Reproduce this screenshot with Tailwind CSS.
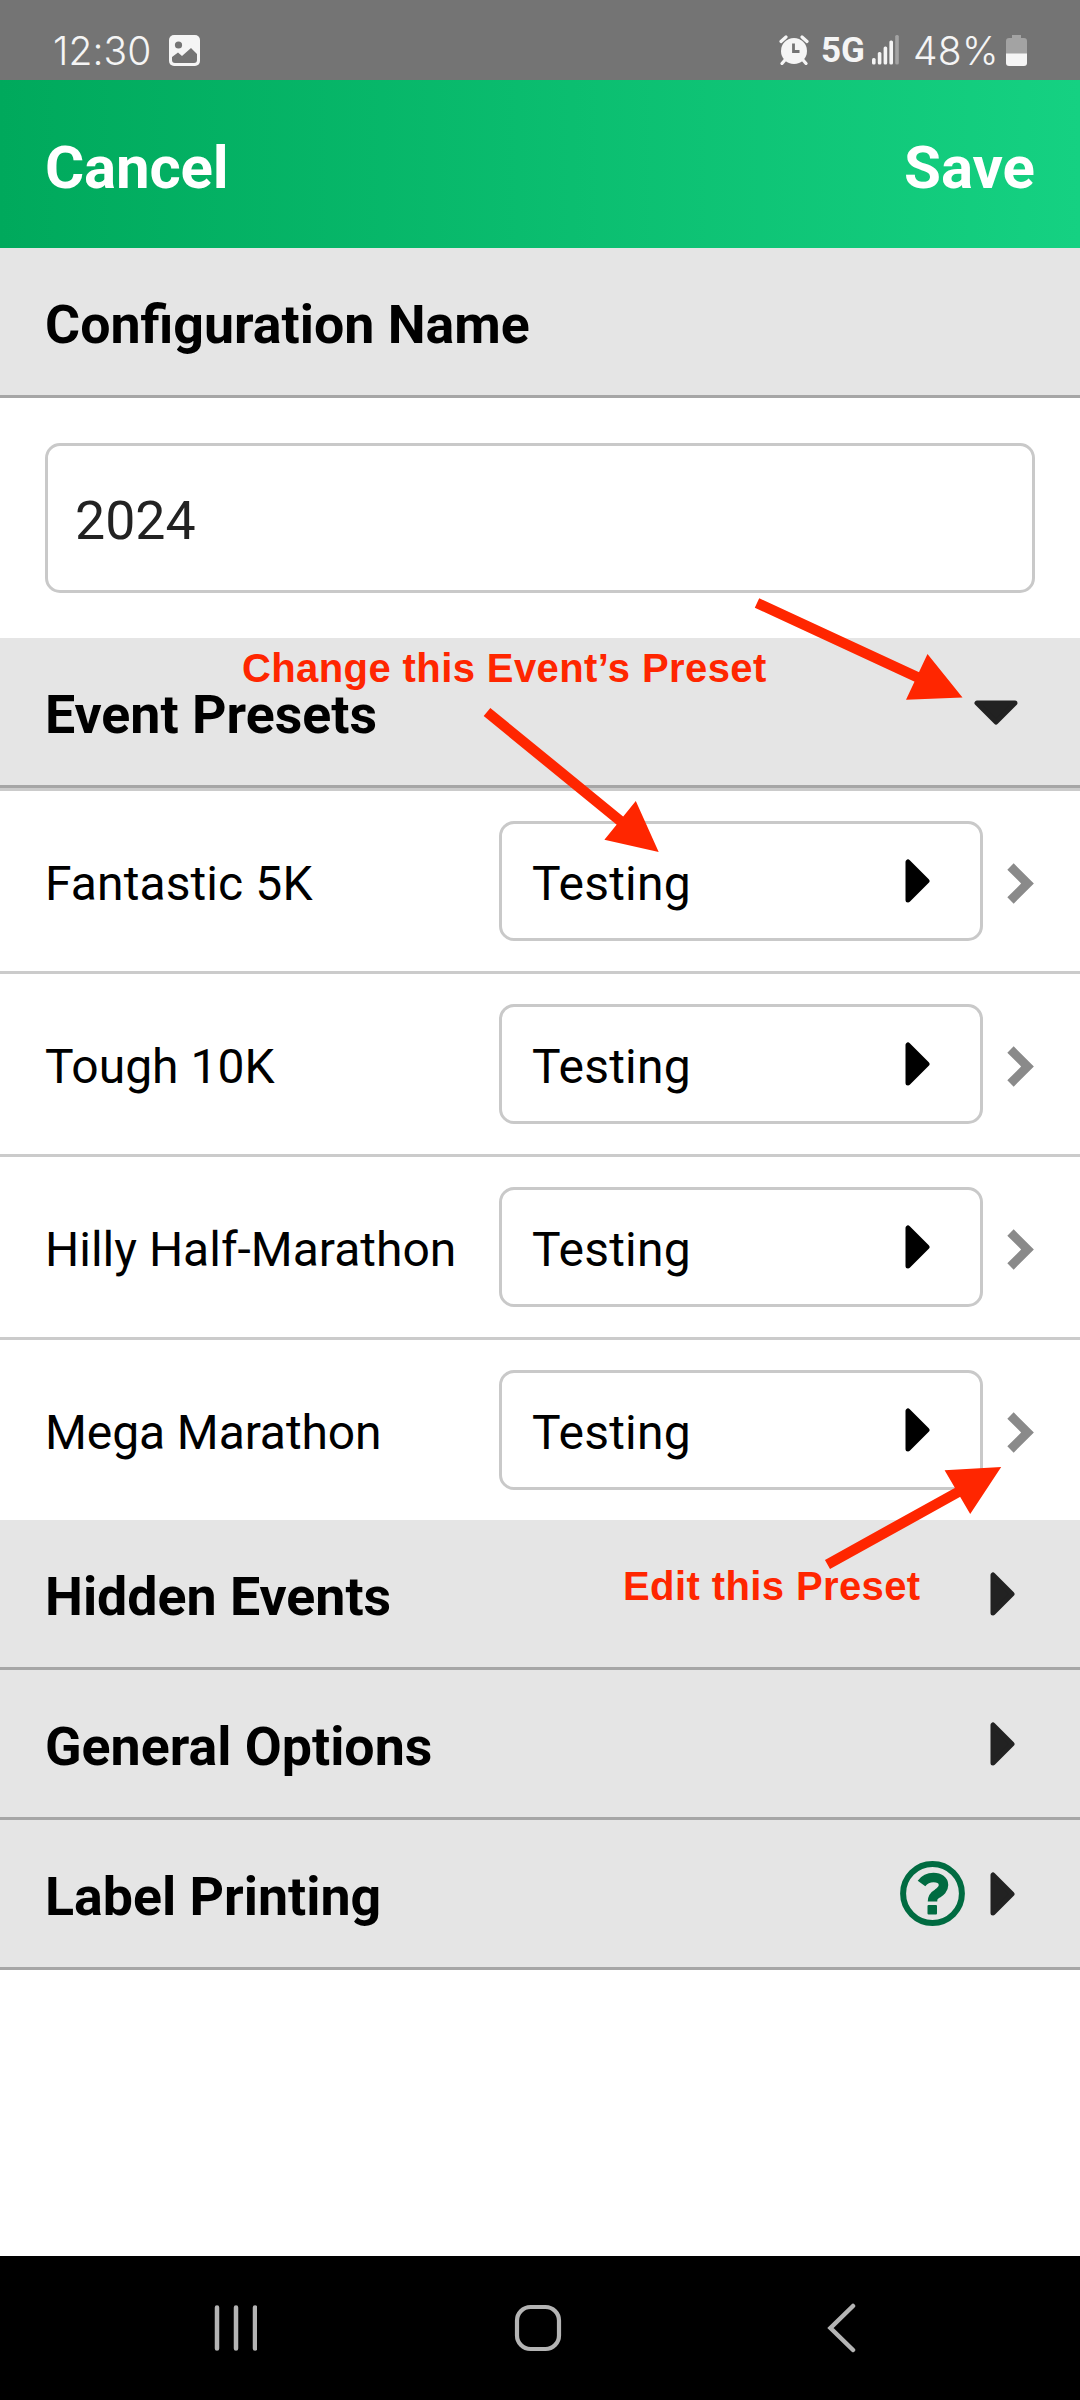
<!DOCTYPE html>
<html lang="en">
<head>
<meta charset="utf-8">
<title>Configuration</title>
<script src="https://cdn.jsdelivr.net/npm/@tailwindcss/browser@4"></script>
</head>
<body class="bg-white">
<svg width="0" height="0" class="absolute">
  <defs>
    <symbol id="caret-right" viewBox="0 0 25 44"><path d="M3 3V41L22 22Z" fill="currentColor" stroke="currentColor" stroke-width="5" stroke-linejoin="round"/></symbol>
    <symbol id="caret-down" viewBox="0 0 44 25"><path d="M3 3H41L22 22Z" fill="currentColor" stroke="currentColor" stroke-width="5" stroke-linejoin="round"/></symbol>
    <symbol id="chevron" viewBox="0 0 27 41"><path d="M3.500 3.500L20.500 20.500L3.500 37.500" fill="none" stroke="currentColor" stroke-width="9" stroke-linejoin="miter"/></symbol>
  </defs>
</svg>
<div class="relative flex h-[2400px] w-[1080px] flex-col overflow-hidden bg-white font-[Roboto,sans-serif] text-black">

  <div class="flex h-20 shrink-0 items-center justify-between bg-[#747474] pl-[52px] pr-[53px] pt-[20px] text-[#f5f5f5]">
    <div class="flex items-center gap-[18px]">
      <span class="w-[99px] whitespace-nowrap pl-px font-[Inter,sans-serif] text-[39px] font-[350] leading-[47px] tracking-[0.1px]">12:30</span>
      <svg width="31" height="31" viewBox="0 0 31 31"><rect width="31" height="31" rx="5" fill="#f5f5f5"/><circle cx="9.5" cy="10" r="3.6" fill="#747474"/><path d="M3 22L9 17.5L13 21L22 13L28 19V25Q28 28 25 28H6Q3 28 3 25Z" fill="#747474"/></svg>
    </div>
    <div class="flex items-center">
      <svg width="30" height="30" viewBox="0 0 30 30"><circle cx="15" cy="16" r="13" fill="#f5f5f5"/><path d="M2 6.5L7 2M28 6.5L23 2M6 25L3 28.5M24 25L27 28.5" stroke="#f5f5f5" stroke-width="3.2" stroke-linecap="round"/><path d="M14.5 8.5V16.5H20.5" fill="none" stroke="#747474" stroke-width="2.8"/></svg>
      <span class="ml-[12px] w-[44px] pt-[2px] text-[35px] font-bold leading-[42px]">5G</span>
      <svg class="ml-[7px]" width="27" height="30" viewBox="0 0 27 30" fill="#f5f5f5"><rect y="23" width="3.6" height="6.5" rx="1.5"/><rect x="5.8" y="17" width="3.6" height="12.5" rx="1.5"/><rect x="11.6" y="11.5" width="3.6" height="18" rx="1.5"/><rect x="17.4" y="5.500" width="3.600" height="24" rx="1.5"/><rect x="23.200" width="3.6" height="29.500" rx="1.500" fill="#a3a3a3"/></svg>
      <span class="ml-[14px] w-[86px] whitespace-nowrap font-[Inter,sans-serif] text-[39px] font-[350] leading-[47px] tracking-[0.3px]">48%</span>
      <svg class="ml-[7px]" width="21" height="31" viewBox="0 0 21 31"><path d="M6 0H15V3H18Q21 3 21 6V19H0V6Q0 3 3 3H6Z" fill="#a3a3a3"/><path d="M0 18.500H21V28Q21 31 18 31H3Q0 31 0 28Z" fill="#f5f5f5"/></svg>
    </div>
  </div>

  <header class="flex h-[168px] shrink-0 items-center justify-between bg-linear-to-r from-[#00a95c] to-[#15d182] px-[45px] pt-[7px] text-[60px] font-bold text-white">
    <span class="tracking-[-0.2px]">Cancel</span>
    <span>Save</span>
  </header>

  <section class="flex h-[150px] shrink-0 items-center border-b-3 border-[#a6a6a6] bg-[#e5e5e5] px-[45px] pt-[8px] text-[53.7px] font-bold">Configuration Name</section>
  <div class="flex h-[240px] shrink-0 items-center px-[45px]">
    <div class="flex h-[150px] w-full items-center rounded-[15px] border-3 border-[#c9c9c9] px-[27px] pt-[6px] text-[53.7px] text-[#222]">2024</div>
  </div>

  <section class="flex h-[150px] shrink-0 items-center justify-between border-b-3 border-[#a6a6a6] bg-[#e5e5e5] pl-[45px] pr-[62px]">
    <span class="pt-[8px] text-[53.7px] font-bold">Event Presets</span>
    <svg class="mt-[2px] text-[#222]" width="44" height="25"><use href="#caret-down"/></svg>
  </section>

  <div class="shrink-0 divide-y-3 divide-[#cbcbcb] border-t-3 border-[#cbcbcb] text-[48px]">
    <div class="flex h-[183px] items-center pl-[45px]"><span class="w-[454px] pt-[6px] tracking-[0.1px]">Fantastic 5K</span><div class="flex h-[120px] w-[484px] items-center justify-between rounded-[15px] border-3 border-[#c9c9c9] pl-[30px] pr-[50px]"><span class="pt-[6px] tracking-[0.2px]">Testing</span><svg width="25" height="44"><use href="#caret-right"/></svg></div><svg class="ml-[24px] mt-[5px] text-[#8a8a8a]" width="27" height="41"><use href="#chevron"/></svg></div>
    <div class="flex h-[183px] items-center pl-[45px]"><span class="w-[454px] pt-[6px]">Tough 10K</span><div class="flex h-[120px] w-[484px] items-center justify-between rounded-[15px] border-3 border-[#c9c9c9] pl-[30px] pr-[50px]"><span class="pt-[6px] tracking-[0.2px]">Testing</span><svg width="25" height="44"><use href="#caret-right"/></svg></div><svg class="ml-[24px] mt-[5px] text-[#8a8a8a]" width="27" height="41"><use href="#chevron"/></svg></div>
    <div class="flex h-[183px] items-center pl-[45px]"><span class="w-[454px] pt-[6px]">Hilly Half-Marathon</span><div class="flex h-[120px] w-[484px] items-center justify-between rounded-[15px] border-3 border-[#c9c9c9] pl-[30px] pr-[50px]"><span class="pt-[6px] tracking-[0.2px]">Testing</span><svg width="25" height="44"><use href="#caret-right"/></svg></div><svg class="ml-[24px] mt-[5px] text-[#8a8a8a]" width="27" height="41"><use href="#chevron"/></svg></div>
    <div class="flex h-[180px] items-center pl-[45px]"><span class="w-[454px] pt-[6px] tracking-[-0.1px]">Mega Marathon</span><div class="flex h-[120px] w-[484px] items-center justify-between rounded-[15px] border-3 border-[#c9c9c9] pl-[30px] pr-[50px]"><span class="pt-[6px] tracking-[0.2px]">Testing</span><svg width="25" height="44"><use href="#caret-right"/></svg></div><svg class="ml-[24px] mt-[5px] text-[#8a8a8a]" width="27" height="41"><use href="#chevron"/></svg></div>
  </div>

  <section class="flex h-[150px] shrink-0 items-center justify-between border-b-3 border-[#a6a6a6] bg-[#e5e5e5] pl-[45px] pr-[65px]">
    <span class="pt-[8px] text-[53.7px] font-bold">Hidden Events</span>
    <svg class="text-[#222]" width="25" height="44"><use href="#caret-right"/></svg>
  </section>
  <section class="flex h-[150px] shrink-0 items-center justify-between border-b-3 border-[#a6a6a6] bg-[#e5e5e5] pl-[45px] pr-[65px]">
    <span class="pt-[8px] text-[53.7px] font-bold">General Options</span>
    <svg class="text-[#222]" width="25" height="44"><use href="#caret-right"/></svg>
  </section>
  <section class="flex h-[150px] shrink-0 items-center justify-between border-b-3 border-[#a6a6a6] bg-[#e5e5e5] pl-[45px] pr-[65px]">
    <span class="pt-[8px] text-[53.7px] font-bold">Label Printing</span>
    <div class="flex items-center gap-[25px]">
      <svg width="65" height="65" viewBox="0 0 65 65"><circle cx="32.5" cy="32.500" r="29.400" fill="none" stroke="#006b41" stroke-width="6"/><path d="M21.500 22.500Q26 16.500 33.500 16.500C39.500 16.500 43.500 19.500 43.500 24C43.500 28.500 40.500 30.500 37.500 32.500C34 34.500 32.500 36 32.500 40.500" fill="none" stroke="#006b41" stroke-width="9.500"/><rect x="27.500" y="44" width="9.500" height="9.500" rx="1" fill="#006b41"/></svg>
      <svg class="text-[#222]" width="25" height="44"><use href="#caret-right"/></svg>
    </div>
  </section>

  <nav class="mt-auto flex h-36 shrink-0 items-center bg-black pl-[214px]">
    <svg width="43" height="48" viewBox="0 0 43 48" stroke="#b4b4b4" stroke-width="4.500" stroke-linecap="round"><path d="M3 3.500V44.500M22 3.500V44.500M41 3.500V44.500"/></svg>
    <svg class="ml-[257px]" width="48" height="48" viewBox="0 0 48 48"><rect x="3" y="3" width="42" height="42" rx="13.500" fill="none" stroke="#b4b4b4" stroke-width="4.200"/></svg>
    <svg class="ml-[265px]" width="29" height="50" viewBox="0 0 29 50"><path d="M26 3L3.500 25L26 47" fill="none" stroke="#b4b4b4" stroke-width="4.500" stroke-linecap="round"/></svg>
  </nav>

  <!-- callouts laid over the form -->
  <svg class="absolute inset-0" width="1080" height="2400" viewBox="0 0 1080 2400" fill="#ff2600" stroke="#ff2600">
    <path d="M757 603L918 677.500M487 712L621 821.500M827.500 1564.500L960 1491" stroke-width="10.500"/>
    <path d="M962.500 697.500L927.500 654L906 699.700ZM658.700 852L635.800 801L604.400 839.700ZM1001.200 1467L944.600 1470.300L970.200 1514Z" stroke="none"/>
  </svg>
  <span class="absolute left-[242px] top-[645px] whitespace-nowrap font-['Liberation_Sans',sans-serif] text-[40px] font-bold leading-[46px] tracking-[0.4px] text-[#ff2600]">Change this Event’s Preset</span>
  <span class="absolute left-[623px] top-[1563px] whitespace-nowrap font-['Liberation_Sans',sans-serif] text-[40px] font-bold leading-[46px] tracking-[0.4px] text-[#ff2600]">Edit this Preset</span>
</div>
</body>
</html>
